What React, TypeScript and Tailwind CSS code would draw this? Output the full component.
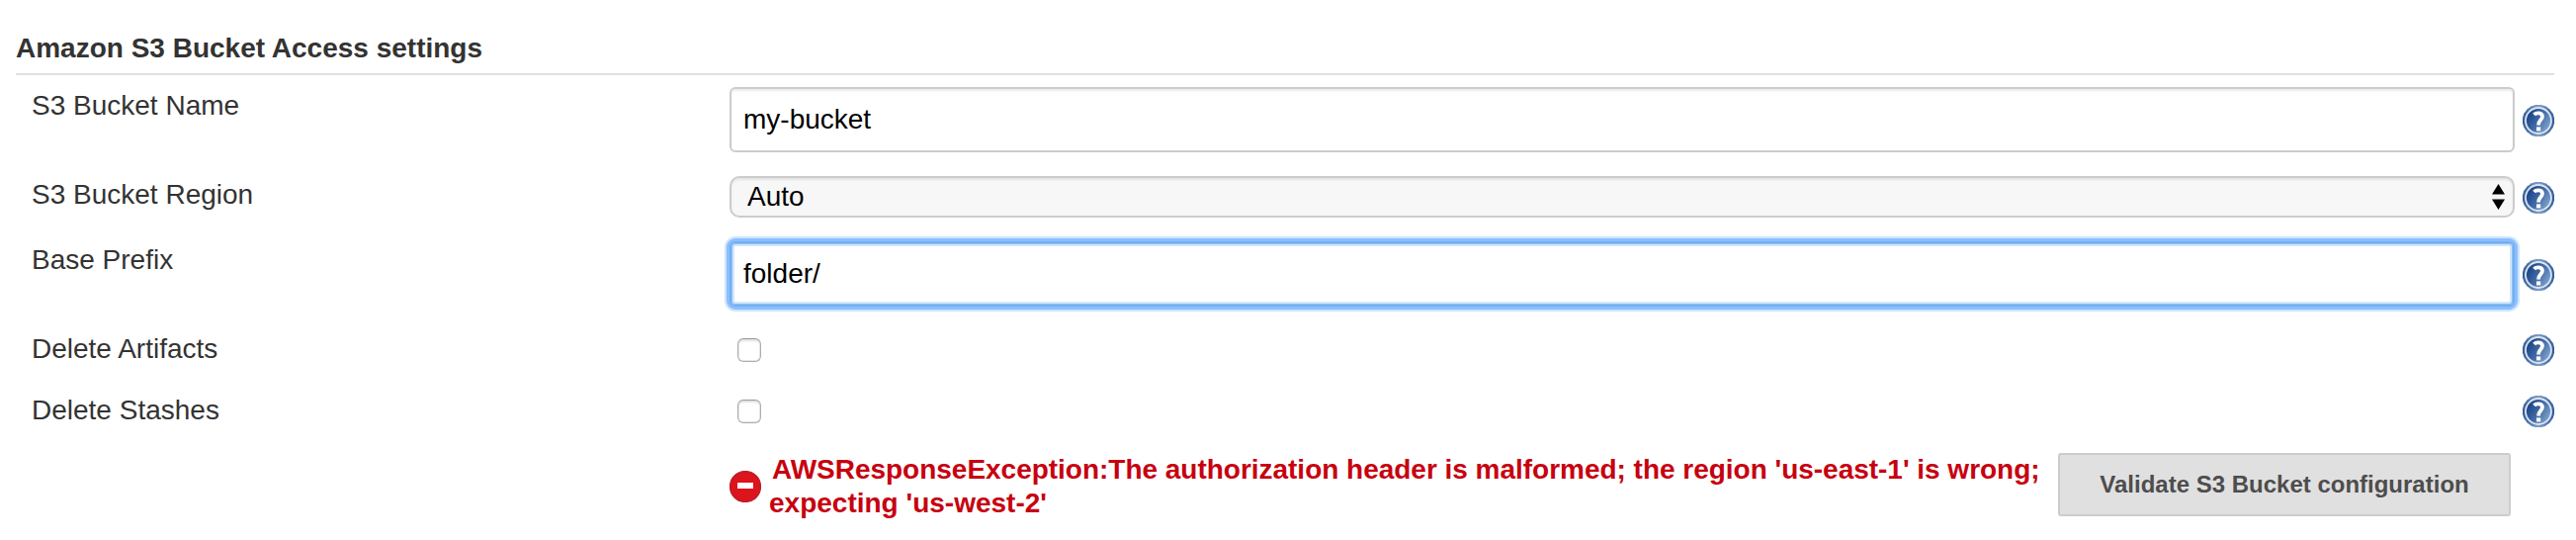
import type { ReactNode } from "react";

function HelpIcon() {
  return (
    <svg className="block h-8 w-8" viewBox="0 0 32 32" aria-label="Help">
      <defs>
        <linearGradient id="helpFill" x1="0" y1="0.2" x2="1" y2="0.8">
          <stop offset="0.1" stopColor="#1c4588" />
          <stop offset="0.5" stopColor="#416aa5" />
          <stop offset="1" stopColor="#8aacd4" />
        </linearGradient>
        <linearGradient id="helpRim" x1="0" y1="0" x2="1" y2="0">
          <stop offset="0" stopColor="#2f5a9a" />
          <stop offset="0.5" stopColor="#7f9fc8" />
          <stop offset="1" stopColor="#2f5a9a" />
        </linearGradient>
      </defs>
      <circle cx="16" cy="16" r="16.2" fill="url(#helpRim)" />
      <circle cx="16" cy="16" r="13" fill="url(#helpFill)" stroke="#dbe4f0" strokeWidth="1.8" />
      <path
        d="M11.6 10 C13.6 7.6 20 7.6 20 11.8 C20 15.4 16 15.4 16 20.4"
        fill="none"
        stroke="#fff"
        strokeWidth="3.8"
      />
      <rect x="14" y="22.4" width="4.2" height="4" fill="#fff" />
    </svg>
  );
}

function ErrorIcon() {
  return (
    <svg className="block h-8 w-8 shrink-0" viewBox="0 0 32 32" aria-label="Error">
      <circle cx="16" cy="16" r="15.5" fill="#dc141c" stroke="#b3222a" strokeWidth="1.2" />
      <rect x="8" y="12" width="16" height="6" fill="#fff" />
    </svg>
  );
}

function Row({
  label,
  height,
  labelTop = "pt-[14px]",
  help = "",
  children,
}: {
  label: string;
  height: string;
  labelTop?: string;
  help?: string;
  children: ReactNode;
}) {
  return (
    <div className={`flex items-center ${height}`}>
      <div className={`w-[722px] shrink-0 self-start pl-4 leading-[34px] ${labelTop}`}>{label}</div>
      <div className="w-[1806px] shrink-0">{children}</div>
      <div className={`ml-2 ${help}`}>
        <HelpIcon />
      </div>
    </div>
  );
}

function Checkbox() {
  return (
    <input
      type="checkbox"
      className="ml-2 block h-6 w-6 appearance-none rounded-[6px] border border-[#adadad] border-t-[#999] bg-white shadow-[inset_0_2px_2px_#e2e2e2,inset_0_0_0_1px_#e6e6e6]"
    />
  );
}

export default function App() {
  return (
    <div className="h-[546px] w-[2606px] overflow-hidden bg-white pl-4 font-['Liberation_Sans',Arial,sans-serif] text-[28px] text-[#333]">
      <h2 className="h-[76px] w-[2568px] border-b-2 border-[#e0e0e0] pt-8 font-bold leading-[34px]">
        Amazon S3 Bucket Access settings
      </h2>
      <Row label="S3 Bucket Name" height="h-[90px]" help="pt-[2px]">
        <input
          defaultValue="my-bucket"
          className="block h-[66px] w-full rounded-[6px] border-2 border-[#ccc] bg-white px-3 text-black shadow-[inset_0_2px_2px_rgba(0,0,0,0.075)] outline-none"
        />
      </Row>
      <Row label="S3 Bucket Region" height="h-[66px]" help="pt-[2px]">
        <div className="flex h-[42px] items-center justify-between rounded-[10px] border-2 border-[#ccc] bg-[#f7f7f7] pr-2 pl-4 text-black shadow-[inset_0_2px_2px_rgba(0,0,0,0.075)]">
          <span className="leading-[34px]">Auto</span>
          <svg className="h-[26px] w-[13px]" viewBox="0 0 13 26">
            <path d="M0 10.5 6.5 0 13 10.5ZM0 15.5H13L6.5 26Z" fill="#000" />
          </svg>
        </div>
      </Row>
      <Row label="Base Prefix" height="h-[90px]" help="pt-[2px]">
        <input
          defaultValue="folder/"
          className="block h-[66px] w-full rounded-[6px] border-2 border-[#74aeee] bg-white px-3 text-black shadow-[0_0_0_3px_#8abfff,0_0_0_5px_#cfe5fd,inset_0_0_0_1px_#8fc1fb,inset_0_0_0_3px_#d2e6fc] outline-none"
        />
      </Row>
      <Row label="Delete Artifacts" height="h-[64px]">
        <Checkbox />
      </Row>
      <Row label="Delete Stashes" height="h-[60px]" labelTop="pt-[12px]">
        <Checkbox />
      </Row>
      <div className="flex h-[88px] items-center pl-[722px]">
        <div className="pt-1">
          <ErrorIcon />
        </div>
        <p className="w-[1304px] pt-1 pl-2 text-left font-bold leading-[34px] whitespace-nowrap text-[#c7000f]">
          <span className="pl-[3px] tracking-[-0.02px]">
            AWSResponseException:The authorization header is malformed; the region &apos;us-east-1&apos; is wrong;
          </span>
          <br />
          expecting &apos;us-west-2&apos;
        </p>
        <button className="ml-2 h-16 w-[458px] rounded-[3px] border-2 border-[#ccc] bg-[#e0e0e0] text-[24px] font-bold text-[#4d4d4d]">
          Validate S3 Bucket configuration
        </button>
      </div>
    </div>
  );
}
